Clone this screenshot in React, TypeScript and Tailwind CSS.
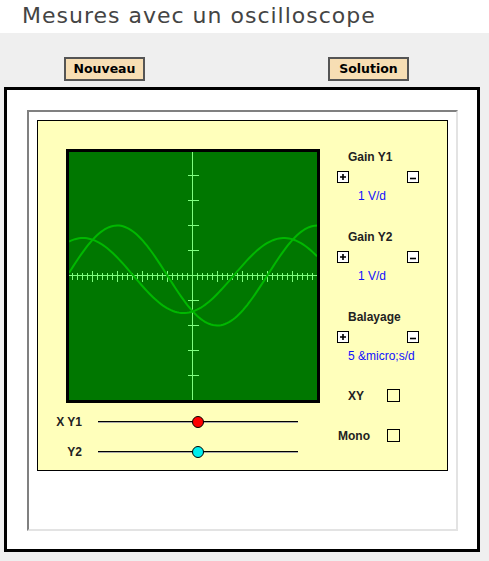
import React from "react"

// trace helpers: screen inner area is 248x248, axis centre at 123.5
const W = 248
const C = 123.5

function wave(amp: number, peakX: number, period: number) {
  const pts: string[] = []
  for (let x = 0; x <= W; x += 2) {
    const y = C - amp * Math.cos((2 * Math.PI * (x - peakX)) / period)
    pts.push(`${x},${y.toFixed(2)}`)
  }
  return "M" + pts.join(" L")
}

const vTicks = [-4, -3, -2, -1, 1, 2, 3, 4]
const hTicks = Array.from({ length: 49 }, (_, i) => i - 24)

function Screen() {
  return (
    <div className="w-[254px] h-[254px] border-[3px] border-black bg-[#007700]">
      <svg width={W} height={W} viewBox={`0 0 ${W} ${W}`} className="block">
        <g stroke="#80ff80" strokeWidth="1" shapeRendering="crispEdges">
          <line x1={C} y1={0} x2={C} y2={W} />
          <line x1={0} y1={C} x2={W} y2={C} />
          {vTicks.map((k) => (
            <line key={k} x1={C - 5} y1={C + 25 * k} x2={C + 6} y2={C + 25 * k} />
          ))}
          {hTicks.map((k) => {
            const h = k % 5 === 0 ? 5 : 3
            return <line key={k} x1={C + 5 * k} y1={C - h} x2={C + 5 * k} y2={C + h + 1} />
          })}
        </g>
        <g fill="none" stroke="#00b800" strokeWidth="2">
          <path d={wave(50, 48.3, 200)} />
          <path d={wave(37.5, 14, 201)} />
        </g>
      </svg>
    </div>
  )
}

function Slider({ label, color }: { label: string; color: string }) {
  return (
    <div className="flex items-center h-[30px]">
      <div className="w-[44px] text-right text-[12px] font-bold text-[#222]">{label}</div>
      <div className="relative ml-[16px] w-[200px] h-[12px]">
        <div className="absolute left-0 right-0 top-[5px] h-px bg-black" />
        <div className="absolute left-0 right-0 top-[6px] h-px bg-[#aaa]" />
        <div
          className="absolute top-0 left-[94px] w-[12px] h-[12px] rounded-full border border-black"
          style={{ backgroundColor: color }}
        />
      </div>
    </div>
  )
}

function PlusMinus() {
  return (
    <div className="flex h-[12px] ml-[17px]">
      <div className="w-[12px] h-[12px] border border-black bg-white">
        <svg width="10" height="10" viewBox="0 0 10 10" className="block">
          <path d="M2 5h6M5 2v6" stroke="black" strokeWidth="1.6" />
        </svg>
      </div>
      <div className="w-[12px] h-[12px] ml-[58px] border border-black bg-white">
        <svg width="10" height="10" viewBox="0 0 10 10" className="block">
          <path d="M2 6.5h6" stroke="black" strokeWidth="1.6" />
        </svg>
      </div>
    </div>
  )
}

function Control({ label, value, valuePad, first }: { label: string; value: string; valuePad: string; first?: boolean }) {
  return (
    <div className={first ? "" : "mt-[27px]"}>
      <div className="h-[14px] leading-[14px] pl-[28px] text-[12px] font-bold text-[#222]">{label}</div>
      <div className="mt-[7px]">
        <PlusMinus />
      </div>
      <div className={`mt-[6px] h-[14px] leading-[14px] text-[12px] text-[#1010ff] ${valuePad}`}>{value}</div>
    </div>
  )
}

function Check({ label, pad }: { label: string; pad: string }) {
  return (
    <div className="flex items-center h-[13px]">
      <div className={`w-[67px] text-[12px] font-bold text-[#222] ${pad}`}>{label}</div>
      <div className="w-[13px] h-[13px] border border-black" />
    </div>
  )
}

export default function App() {
  return (
    <div className="w-[489px] h-[561px] bg-[#efefef] overflow-hidden">
      <div className="h-[33px] bg-white pl-[22px] pt-[2px] text-[22px] leading-[28px] tracking-[1px] text-[#444] font-['DejaVu_Sans',sans-serif]">
        Mesures avec un oscilloscope
      </div>

      <div className="flex pt-[24px] pl-[64px] font-['DejaVu_Sans',sans-serif]">
        <button className="w-[81px] h-[24px] border-2 border-[#555] bg-[#f7deb4] text-[12.5px] font-bold text-black">
          Nouveau
        </button>
        <button className="ml-[183px] w-[81px] h-[24px] border-2 border-[#555] bg-[#f7deb4] text-[12.5px] font-bold text-black">
          Solution
        </button>
      </div>

      <div className="ml-[4px] mt-[6px] w-[476px] h-[465px] border-[3px] border-black bg-white pl-[20px] pt-[20px]">
        <div className="w-[431px] h-[421px] border-2 border-t-[#808080] border-l-[#808080] border-r-[#e3e3e3] border-b-[#e3e3e3] pl-[8px] pt-[8px]">
          <div className="flex w-[411px] h-[351px] border border-black bg-[#ffffbb] font-['Liberation_Sans',Arial,sans-serif]">
            <div className="w-[282px] pt-[28px]">
              <div className="ml-[28px]">
                <Screen />
              </div>
              <div className="mt-[4px]">
                <Slider label="X Y1" color="#ff0000" />
                <Slider label="Y2" color="#00eeee" />
              </div>
            </div>

            <div className="flex-1 pt-[29px]">
              <Control first label="Gain Y1" value="1 V/d" valuePad="pl-[38px]" />
              <Control label="Gain Y2" value="1 V/d" valuePad="pl-[38px]" />
              <Control label="Balayage" value={"5 &micro;s/d"} valuePad="pl-[28px]" />
              <div className="mt-[26px]">
                <Check label="XY" pad="pl-[28px]" />
              </div>
              <div className="mt-[27px]">
                <Check label="Mono" pad="pl-[18px]" />
              </div>
            </div>
          </div>
        </div>
      </div>
    </div>
  )
}
